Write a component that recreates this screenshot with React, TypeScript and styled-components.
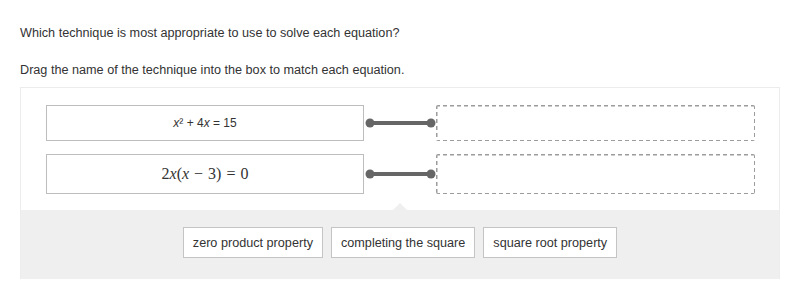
import React from 'react';
import styled, { createGlobalStyle } from 'styled-components';

const GlobalStyle = createGlobalStyle`
  html, body {
    margin: 0;
    padding: 0;
    background: #ffffff;
    font-family: "Liberation Sans", Arial, sans-serif;
    color: #333333;
  }
`;

const Page = styled.div`
  width: 800px;
  height: 294px;
  padding: 25px 20px 0 20px;
  box-sizing: border-box;
`;

const Prompt = styled.p<{ $gap: number }>`
  margin: 0 0 ${({ $gap }) => $gap}px 0;
  font-size: 12.65px;
  line-height: 16px;
  color: #333333;
`;

const Panel = styled.div`
  width: 760px;
  border: 1px solid #ececec;
  border-bottom: none;
  box-sizing: border-box;
`;

const MatchArea = styled.div`
  display: flex;
  flex-direction: column;
  gap: 13px;
  padding: 17px 0 16px 25px;
`;

const Row = styled.div<{ $h: number }>`
  display: flex;
  align-items: stretch;
  height: ${({ $h }) => $h}px;
`;

const Equation = styled.div<{ $math?: boolean }>`
  width: 318px;
  box-sizing: border-box;
  border: 1px solid #bdbdbd;
  display: flex;
  align-items: center;
  justify-content: center;
  font-size: ${({ $math }) => ($math ? '16px' : '12px')};
  font-family: ${({ $math }) =>
    $math ? '"Liberation Serif", "DejaVu Serif", serif' : '"Liberation Sans", Arial, sans-serif'};
  color: #333333;
  i {
    font-style: italic;
  }
`;

const Op = styled.span`
  padding: 0 5px;
`;

const Connector = styled.svg`
  width: 72px;
  flex: none;
  align-self: center;
`;

/* dashed outline drawn with gradients to get short, dense dashes */
const DropBox = styled.div`
  width: 319px;
  box-sizing: border-box;
  border-radius: 2px;
  background:
    repeating-linear-gradient(90deg, #9c9c9c 0 4px, transparent 4px 7px) top left / 100% 1.5px no-repeat,
    repeating-linear-gradient(90deg, #9c9c9c 0 4px, transparent 4px 7px) bottom left / 100% 1.5px no-repeat,
    repeating-linear-gradient(180deg, #9c9c9c 0 4px, transparent 4px 7px) top left / 1.5px 100% no-repeat,
    repeating-linear-gradient(180deg, #9c9c9c 0 4px, transparent 4px 7px) top right / 1.5px 100% no-repeat;
`;

const Bank = styled.div`
  position: relative;
  background: #efefef;
  height: 69px;
  display: flex;
  justify-content: center;
  align-items: flex-start;
  gap: 8px;
  padding-top: 17px;
  box-sizing: border-box;

  &::before {
    content: '';
    position: absolute;
    left: 372px;
    top: -7px;
    border-left: 7px solid transparent;
    border-right: 7px solid transparent;
    border-bottom: 7px solid #efefef;
  }
`;

const Chip = styled.div`
  height: 31px;
  box-sizing: border-box;
  padding: 0 9px;
  border: 1px solid #c4c4c4;
  background: #ffffff;
  display: flex;
  align-items: center;
  font-size: 12.65px;
  color: #333333;
`;

const Link = () => (
  <Connector viewBox="0 0 72 10" height="10">
    <line x1="6" y1="5" x2="67" y2="5" stroke="#666666" strokeWidth="4" />
    <circle cx="6" cy="5" r="4.5" fill="#666666" />
    <circle cx="67" cy="5" r="4.5" fill="#666666" />
  </Connector>
);

const chips = ['zero product property', 'completing the square', 'square root property'];

export default function App() {
  return (
    <Page>
      <GlobalStyle />
      <Prompt $gap={21}>Which technique is most appropriate to use to solve each equation?</Prompt>
      <Prompt $gap={9}>Drag the name of the technique into the box to match each equation.</Prompt>
      <Panel>
        <MatchArea>
          <Row $h={36}>
            <Equation>
              <span>
                <i>x</i>² + 4<i>x</i> = 15
              </span>
            </Equation>
            <Link />
            <DropBox />
          </Row>
          <Row $h={40}>
            <Equation $math>
              <span>
                2<i>x</i>(<i>x</i>
                <Op>−</Op>3)
                <Op>=</Op>0
              </span>
            </Equation>
            <Link />
            <DropBox />
          </Row>
        </MatchArea>
        <Bank>
          {chips.map((c) => (
            <Chip key={c}>{c}</Chip>
          ))}
        </Bank>
      </Panel>
    </Page>
  );
}
